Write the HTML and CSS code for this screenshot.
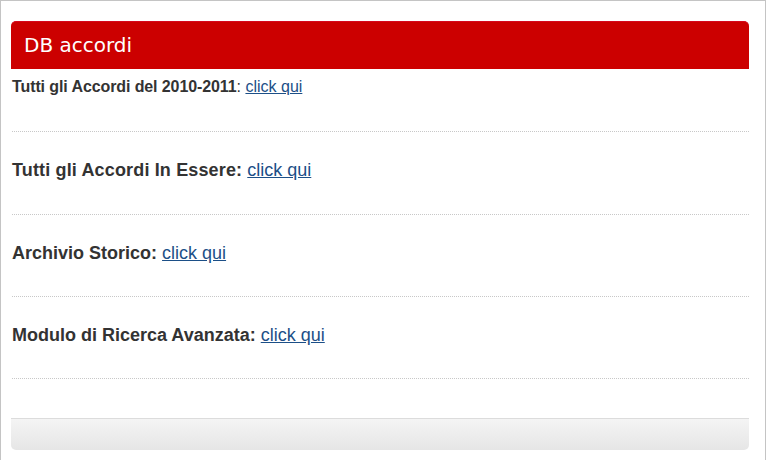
FILE: index.html
```html
<!DOCTYPE html>
<html lang="it">
<head>
    <meta charset="UTF-8">
    <title>DB accordi</title>
    <link rel="stylesheet" href="styles.css">
</head>
<body>
    <div class="page">
        <div class="box">
            <h2 class="box-title">DB accordi</h2>
            <div class="box-body">
                <div class="row row-first">
                    <strong>Tutti gli Accordi del 2010-2011</strong>: <a href="#">click qui</a>
                </div>
                <div class="row row-tall">
                    <strong>Tutti gli Accordi In Essere:</strong> <a href="#">click qui</a>
                </div>
                <div class="row">
                    <strong>Archivio Storico:</strong> <a href="#">click qui</a>
                </div>
                <div class="row">
                    <strong>Modulo di Ricerca Avanzata:</strong> <a href="#">click qui</a>
                </div>
            </div>
            <div class="box-foot"></div>
        </div>
    </div>
</body>
</html>
```

FILE: styles.css
```css
body {
    margin: 0;
    font-family: "Liberation Sans", Arial, sans-serif;
    color: #333;
    background: #fff;
}

.page {
    width: 766px;
    height: 480px;
    border: 1px solid #c4c4c4;
    border-bottom: none;
    padding: 20px 0 0 10px;
    box-sizing: border-box;
}

.box {
    width: 738px;
}

.box-title {
    margin: 0;
    height: 48px;
    padding-left: 13px;
    background: #cc0000;
    border-top: 1px solid #d6081c;
    border-radius: 5px 5px 0 0;
    color: #fff;
    font-family: "DejaVu Sans", Verdana, sans-serif;
    font-weight: normal;
    font-size: 20px;
    line-height: 46px;
    box-sizing: border-box;
}

.box-body {
    padding-left: 1px;
}

.row {
    padding: 28px 0 33px;
    font-size: 18px;
    line-height: 20px;
    border-bottom: 1px dotted #c8c8c8;
}

.row-first {
    padding: 9px 0 35px;
    font-size: 16px;
    line-height: 18px;
}

.row-first strong {
    letter-spacing: -0.1px;
}

.row-tall {
    padding-bottom: 34px;
}

.row-tall strong {
    letter-spacing: 0.15px;
}

.row a {
    color: #1c4f87;
}

.box-foot {
    margin-top: 39px;
    height: 32px;
    border-top: 1px solid #dcdcdc;
    border-radius: 0 0 5px 5px;
    background: linear-gradient(#f4f4f4, #e6e6e6);
    box-sizing: border-box;
}
```
